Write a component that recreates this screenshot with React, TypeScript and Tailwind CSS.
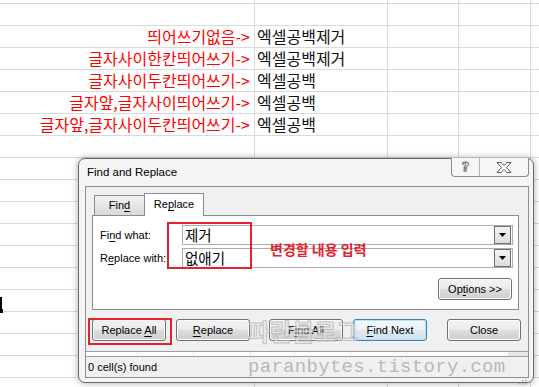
import { ReactNode } from "react";
import clsx from "clsx";

const UI = "font-['Liberation_Sans',Arial,sans-serif]";

const rows: { a: string; b: string }[] = [
  { a: "", b: "" },
  { a: "띄어쓰기없음->", b: "엑셀공백제거" },
  { a: "글자사이한칸띄어쓰기->", b: "엑셀공백제거" },
  { a: "글자사이두칸띄어쓰기->", b: "엑셀공백" },
  { a: "글자앞,글자사이띄어쓰기->", b: "엑셀공백" },
  { a: "글자앞,글자사이두칸띄어쓰기->", b: "엑셀공백" },
  ...Array.from({ length: 12 }, () => ({ a: "", b: "" })),
];

function U({ children }: { children: ReactNode }) {
  return <span className="underline decoration-1 underline-offset-[2px]">{children}</span>;
}

function Btn({
  children,
  className,
  primary,
}: {
  children: ReactNode;
  className?: string;
  primary?: boolean;
}) {
  return (
    <div
      className={clsx(
        "flex h-[22px] w-[74px] items-center justify-center rounded-[3px] border text-[11px] text-black",
        primary
          ? "border-[#3c7fb1] bg-[linear-gradient(#f4f9fc,#eaf3f8_50%,#dde9f0_50%,#d3e2ea)] shadow-[inset_0_0_0_1px_#b6e3fb]"
          : "border-[#707070] bg-[linear-gradient(#f2f2f2,#ebebeb_50%,#dddddd_50%,#cfcfcf)] shadow-[inset_0_0_0_1px_#fcfcfc]",
        className,
      )}
    >
      <span className="whitespace-pre">{children}</span>
    </div>
  );
}

function Combo({ value }: { value: string }) {
  return (
    <div className="ml-[82px] mr-[5px] flex h-[20px] flex-1 items-center border border-[#abadb3] bg-white pl-[2px] pr-px">
      <span className="flex-1 font-['Noto_Sans_CJK_KR',sans-serif] text-[14.5px] leading-[18px] text-black">
        {value}
      </span>
      <div className="flex h-[18px] w-[17px] items-center justify-center border border-[#707070] bg-[linear-gradient(#f4f4f4,#dcdcdc)]">
        <svg width="7" height="4" viewBox="0 0 7 4">
          <polygon points="0,0 7,0 3.5,4" fill="#000" />
        </svg>
      </div>
    </div>
  );
}

function Sheet() {
  const line = "border-[#dadada]";
  return (
    <div className="flex flex-col font-['Noto_Sans_CJK_KR',sans-serif]">
      <div className={clsx("grid h-[4px] grid-cols-[255px_133px_71px_72px_1fr] border-b", line)}>
        <div className={clsx("border-r", line)} />
        <div className={clsx("border-r", line)} />
        <div className={clsx("border-r", line)} />
        <div className={clsx("border-r", line)} />
        <div />
      </div>
      {rows.map((r, i) => (
        <div
          key={i}
          className={clsx("grid h-[22px] grid-cols-[255px_133px_71px_72px_1fr] border-b", line)}
        >
          <div
            className={clsx(
              "whitespace-nowrap border-r pr-[4px] text-right text-[16px] leading-[21px] text-[#ff0000]",
              line,
            )}
          >
            {r.a}
          </div>
          <div
            className={clsx(
              "whitespace-nowrap border-r pl-[2px] text-[16px] leading-[21px] text-[#111]",
              line,
            )}
          >
            {r.b}
          </div>
          <div className={clsx("border-r", line)} />
          <div className={clsx("border-r", line)} />
          <div />
        </div>
      ))}
    </div>
  );
}

function Dialog() {
  return (
    <div
      className={clsx(
        "absolute left-[78px] top-[158px] flex h-[225px] w-[456px] flex-col rounded-[7px] border border-[#6a6a6a] bg-[#f4f4f4] shadow-[0_0_7px_rgba(0,0,0,0.35)]",
        UI,
      )}
    >
      <div className="flex h-[27px] shrink-0">
        <div className="flex items-center pl-[8px] text-[11.5px] text-black">Find and Replace</div>
        <div className="-mt-px ml-auto mr-[4px] flex h-[19px] self-start rounded-b-[4px] border border-t-0 border-[#8d8d8d] bg-[#f6f6f6]">
          <div className="flex w-[28px] items-center justify-center border-r border-[#b5b5b5] font-['DejaVu_Sans',sans-serif] text-[13px] font-bold text-white [-webkit-text-stroke:0.8px_#555]">
            ?
          </div>
          <div className="flex w-[48px] items-center justify-center">
            <svg width="16" height="11" viewBox="0 0 16 11">
              <polygon
                points="1,0.5 5,0.5 8,3.5 11,0.5 15,0.5 10.5,5.5 15,10.5 11,10.5 8,7.5 5,10.5 1,10.5 5.5,5.5"
                fill="#fff"
                stroke="#555"
                strokeWidth="1"
              />
            </svg>
          </div>
        </div>
      </div>

      <div className="ml-[6px] mr-[4px] flex h-[192px] flex-col border border-[#8e8f8f] bg-[#f0f0f0]">
        <div className="ml-[8px] mt-[6px] flex h-[22px] items-end">
          <div className="flex h-[20px] w-[51px] items-center justify-center border border-b-0 border-[#898c95] bg-[linear-gradient(#f3f3f3,#e5e5e5_50%,#d9d9d9)] text-[11px] text-black">
            <span>
              Fin<U>d</U>
            </span>
          </div>
          <div className="relative z-10 -mb-px -ml-px flex h-[23px] w-[60px] items-center justify-center border border-b-0 border-[#898c95] bg-white pb-px text-[11px] text-black">
            <span>
              Re<U>p</U>lace
            </span>
          </div>
        </div>

        <div className="ml-[6px] flex h-[95px] w-[427px] flex-col border border-[#898c95] bg-white pt-[9px] text-[11px] text-black">
          <div className="flex h-[20px] items-center pl-[7px]">
            <span className="absolute">
              Fi<U>n</U>d what:
            </span>
            <Combo value="제거" />
          </div>
          <div className="mt-[3px] flex h-[20px] items-center pl-[7px]">
            <span className="absolute">
              R<U>e</U>place with:
            </span>
            <Combo value="없애기" />
          </div>
          <div className="mr-[6px] mt-[10px] flex justify-end">
            <Btn>
              Op<U>t</U>ions &gt;&gt;
            </Btn>
          </div>
        </div>

        <div className="ml-[6px] mt-[9px] flex">
          <Btn>
            Replace <U>A</U>ll
          </Btn>
          <Btn className="ml-[10px]">
            <U>R</U>eplace
          </Btn>
          <Btn className="ml-[19px]">
            F<U>i</U>nd All
          </Btn>
          <Btn className="ml-[10px]" primary>
            <U>F</U>ind Next
          </Btn>
          <Btn className="ml-[20px]">Close</Btn>
        </div>

        <div className="mt-[10px] flex h-[6px] border-y border-[#a0a0a0] bg-white">
          <div className="w-[52px] border-r border-[#e2e2e2]" />
          <div className="w-[56px] border-r border-[#e2e2e2]" />
          <div className="w-[57px] border-r border-[#e2e2e2]" />
          <div className="w-[44px] border-r border-[#e2e2e2]" />
          <div className="w-[56px] border-r border-[#e2e2e2]" />
          <div className="w-[56px] border-r border-[#e2e2e2]" />
          <div className="flex-1" />
          <div className="w-[20px] bg-[#e8e8e8]" />
        </div>
        <div className="flex h-[20px] items-center justify-between pl-[2px] text-[11px] text-black">
          <span>0 cell(s) found</span>
          <svg width="8" height="8" viewBox="0 0 8 8" className="mb-[-8px] mr-px self-end">
            <g fill="#a8a8a8">
              <rect x="6" y="0" width="1.5" height="1.5" />
              <rect x="3" y="3" width="1.5" height="1.5" />
              <rect x="6" y="3" width="1.5" height="1.5" />
              <rect x="0" y="6" width="1.5" height="1.5" />
              <rect x="3" y="6" width="1.5" height="1.5" />
              <rect x="6" y="6" width="1.5" height="1.5" />
            </g>
          </svg>
        </div>
      </div>
    </div>
  );
}

export default function App() {
  return (
    <div className="relative h-[387px] w-[539px] overflow-hidden bg-white">
      <Sheet />

      {/* selected cell edge + fill handle peeking at the left */}
      <div className="absolute left-0 top-[297px] h-[14px] w-[2px] bg-black" />
      <div className="absolute left-0 top-[309px] h-[4px] w-[3px] bg-black" />

      <Dialog />

      {/* annotations */}
      <div className="absolute left-[167px] top-[222px] h-[47px] w-[85px] border-2 border-[#e3232c]" />
      <div className="absolute left-[270px] top-[240px] font-['Noto_Sans_CJK_KR',sans-serif] text-[14px] font-bold leading-[18px] text-[#e3232c]">
        변경할 내용 입력
      </div>
      <div className="absolute left-[88px] top-[318px] h-[27px] w-[84px] border-2 border-[#e3232c]" />

      {/* watermark */}
      <div className="pointer-events-none absolute left-[248px] top-[316px] font-['Noto_Sans_CJK_KR',sans-serif] text-[24px] font-bold leading-[30px] text-[#e8e8e8] opacity-70 [-webkit-text-stroke:1px_#b0b0b0]">
        파란블로그
      </div>
      <div className="pointer-events-none absolute left-[248px] top-[357px] font-['Liberation_Mono',monospace] text-[19px] leading-[20px] tracking-[0.3px] text-[#b8b8b8]">
        paranbytes.tistory.com
      </div>
    </div>
  );
}
